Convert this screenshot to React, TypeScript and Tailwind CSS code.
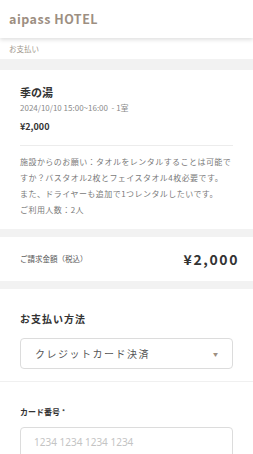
import React from "react";

const FONT = { fontFamily: '"Noto Sans CJK JP", "Noto Sans", sans-serif' };

export default function App() {
  return (
    <div className="min-h-screen bg-[#f2f2f2] text-[#333]" style={FONT}>
      <header className="relative z-10 flex h-[38px] items-center bg-white px-[9px] shadow-[0_2px_4px_rgba(0,0,0,0.12)]">
        <h1 className="text-[12.5px] font-bold tracking-[0.5px] text-[#9d8f82]">aipass HOTEL</h1>
      </header>
      <div className="flex h-[21px] items-center bg-white px-[9px] text-[7.5px] text-[#a0978c]">
        お支払い
      </div>

      <section className="mt-[11px] bg-white px-[20px] pb-[11px] pt-[15px]">
        <p className="text-[11px] font-bold leading-[14px]">季の湯</p>
        <p className="mt-[3px] text-[8px] leading-[12px] text-[#8a8a8a]">2024/10/10 15:00~16:00 &nbsp;- 1室</p>
        <p className="mt-[7px] text-[9px] font-bold leading-[12px]">¥2,000</p>
        <div className="mt-[12px] border-t border-[#ececec]" />
        <div className="mt-[8px] text-[8px] leading-[16px] tracking-[0.45px] text-[#7a7a7a]">
          <p>施設からのお願い：タオルをレンタルすることは可能ですか？バスタオル2枚とフェイスタオル4枚必要です。</p>
          <p>また、ドライヤーも追加で1つレンタルしたいです。</p>
          <p>ご利用人数：2人</p>
        </div>
      </section>

      <section className="mt-[8px] flex h-[44px] items-center justify-between bg-white pl-[20px] pr-[14px]">
        <span className="text-[7.5px] text-[#555]">ご請求金額（税込）</span>
        <span className="text-[14px] font-bold tracking-[1.6px] text-[#333]">¥2,000</span>
      </section>

      <section className="mt-[8px] border-b border-[#f0f0f0] bg-white px-[20px] pb-[12px] pt-[22px]">
        <p className="text-[10px] font-bold tracking-[1px] text-[#333]">お支払い方法</p>
        <div className="mt-[12px] flex h-[31px] items-center justify-between rounded-[4px] border border-[#dcdcdc] pl-[14px] pr-[14px]">
          <span className="text-[10px] tracking-[1.5px] text-[#555]">クレジットカード決済</span>
          <span className="text-[5px] text-[#9d8f82]">▼</span>
        </div>
      </section>

      <section className="bg-white px-[20px] pt-[24px] pb-[20px]">
        <p className="text-[8px] font-bold leading-[12px] text-[#333]">
          カード番号<span className="ml-[2px] align-top text-[6px]">*</span>
        </p>
        <div className="mt-[9px] flex h-[31px] items-center rounded-[4px] border border-[#dcdcdc] px-[13px]">
          <span className="text-[10px] text-[#c4c4c4]" style={{ fontFamily: '"Noto Sans", sans-serif' }}>
            1234 1234 1234 1234
          </span>
        </div>
      </section>
    </div>
  );
}
